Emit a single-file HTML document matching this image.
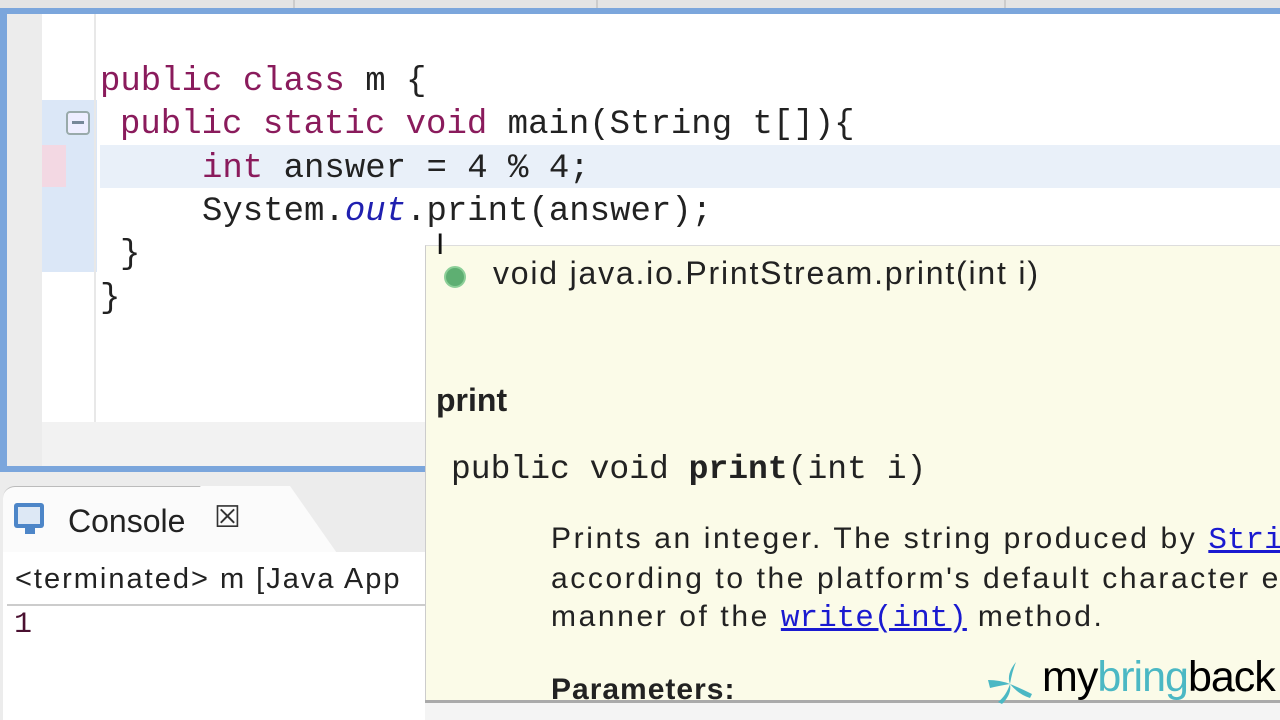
<!DOCTYPE html>
<html><head><meta charset="utf-8"><style>
*{margin:0;padding:0;box-sizing:border-box}
body{width:1280px;height:720px;overflow:hidden;background:#e6e6e6;position:relative;font-family:"Liberation Sans",sans-serif}
.a{position:absolute;white-space:pre}
.m{font-family:"Liberation Mono",monospace;font-size:34px;color:#222}
.k{color:#8a1b5c}
.s{font-size:30px;color:#222}
a{color:#1a1ad0;text-decoration:underline}
</style></head><body>
<div class="a" style="left:0;top:0;width:1280px;height:8px;background:#e4e4e4"></div>
<div class="a" style="left:293px;top:0;width:2px;height:8px;background:#ccc"></div>
<div class="a" style="left:596px;top:0;width:2px;height:8px;background:#ccc"></div>
<div class="a" style="left:1004px;top:0;width:2px;height:8px;background:#ccc"></div>
<!-- editor -->
<div class="a" style="left:0;top:8px;width:1280px;height:464px;background:#7ba6dc"></div>
<div class="a" style="left:7px;top:14px;width:1273px;height:452px;background:#fff"></div>
<div class="a" style="left:7px;top:14px;width:35px;height:452px;background:#ececec"></div>
<div class="a" style="left:42px;top:100px;width:55px;height:172px;background:#dbe7f7"></div>
<div class="a" style="left:42px;top:145px;width:24px;height:42px;background:#f3d8e3"></div>
<div class="a" style="left:94px;top:14px;width:2px;height:452px;background:#e8e8e8"></div>
<div class="a" style="left:42px;top:422px;width:383px;height:44px;background:#f2f2f2"></div>
<div class="a" style="left:100px;top:145px;width:1180px;height:43px;background:#e9f0f9"></div>
<div class="a" style="left:66px;top:111px;width:24px;height:24px;border:2px solid #9aa;border-radius:4px;background:#eef"></div>
<div class="a" style="left:72px;top:121px;width:12px;height:3px;background:#789"></div>
<div class="a m" style="left:100px;top:63px"><span class="k">public class</span> m {</div>
<div class="a m" style="left:120px;top:106px"><span class="k">public static void</span> main(String t[]){</div>
<div class="a m" style="left:202px;top:150px"><span class="k">int</span> answer = 4 % 4;</div>
<div class="a m" style="left:202px;top:193px">System.<i style="color:#2020b0">out</i>.print(answer);</div>
<div class="a m" style="left:120px;top:236px">}</div>
<div class="a m" style="left:100px;top:280px">}</div>
<!-- console -->
<div class="a" style="left:0;top:472px;width:425px;height:248px;background:#ececec"></div>
<div class="a" style="left:3px;top:486px;width:250px;height:66px;background:#fbfbfb;border-radius:12px 0 0 0;border-top:1px solid #bbb"></div>
<div class="a" style="left:200px;top:486px;width:90px;height:66px;background:#fbfbfb;transform:skewX(35deg);transform-origin:top left"></div>
<div class="a" style="left:3px;top:552px;width:422px;height:168px;background:#fff"></div>
<div class="a" style="left:14px;top:503px;width:30px;height:25px;background:#4d86c8;border-radius:3px"></div>
<div class="a" style="left:18px;top:507px;width:22px;height:17px;background:#dde8f5"></div>
<div class="a" style="left:25px;top:528px;width:10px;height:6px;background:#4d86c8"></div>
<div class="a" style="left:68px;top:503px;font-size:32px;color:#222">Console</div>
<div class="a" style="left:214px;top:500px;font-size:30px;color:#333">☒</div>
<div class="a" style="left:15px;top:563px;font-size:29px;letter-spacing:2px;color:#222;width:410px;overflow:hidden">&lt;terminated&gt; m [Java App</div>
<div class="a" style="left:7px;top:604px;width:418px;height:2px;background:#ccc"></div>
<div class="a" style="left:14px;top:608px;font-family:'Liberation Mono',monospace;font-size:30px;color:#4a1030">1</div>
<!-- popup -->
<div class="a" style="left:425px;top:245px;width:855px;height:456px;background:#fbfbe8;border-left:1px solid #ccc;border-top:1px solid #ddd;overflow:hidden">
<div class="a" style="left:18px;top:20px;width:22px;height:22px;border-radius:50%;background:#5eaf72;border:2px solid #8ccf98"></div>
<div class="a s" style="left:67px;top:9px;font-size:32px;letter-spacing:1.8px">void java.io.PrintStream.print(int i)</div>
<div class="a s" style="left:10px;top:136px;font-weight:bold;font-size:32px">print</div>
<div class="a m" style="left:25px;top:205px;font-size:33px">public void <b>print</b>(int i)</div>
<div class="a s" style="left:125px;top:276px;letter-spacing:2.6px">Prints an integer. The string produced by <a class="m" style="font-size:31px;color:#1a1ad0;letter-spacing:0">String.valueOf(int)</a></div>
<div class="a s" style="left:125px;top:316px;letter-spacing:2.6px">according to the platform's default character encoding</div>
<div class="a s" style="left:125px;top:354px;letter-spacing:2.6px">manner of the <a class="m" style="font-size:31px;color:#1a1ad0;letter-spacing:0">write(int)</a> method.</div>
<div class="a s" style="left:125px;top:427px;font-weight:bold;letter-spacing:1px">Parameters:</div>
</div>
<div class="a" style="left:425px;top:700px;width:855px;height:3px;background:#aaa"></div>
<div class="a" style="left:425px;top:703px;width:855px;height:17px;background:#f4f4f4"></div>
<div class="a" style="left:436px;top:228px;font-size:30px;color:#111">I</div>
<!-- logo -->
<svg class="a" style="left:986px;top:660px" width="48" height="46" viewBox="0 0 48 46"><g fill="#4bb8c4"><path d="M30 2 Q20 14 24 24 Q26 12 30 2Z"/><path d="M2 20 Q14 20 24 24 Q12 26 4 28Z"/><path d="M46 34 Q34 28 24 24 Q32 34 44 38Z"/><path d="M16 44 Q26 34 24 24 Q20 36 12 42Z"/></g></svg>
<div class="a" style="left:1042px;top:653px;font-size:43px;letter-spacing:-1px;color:#000">my<span style="color:#4bb8c4">bring</span>back</div>
</body></html>
